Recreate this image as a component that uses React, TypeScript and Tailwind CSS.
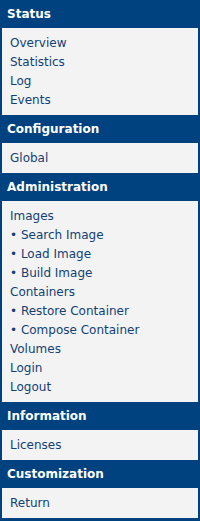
import React from "react";

type Section = { title: string; items: string[] };

const sections: Section[] = [
  { title: "Status", items: ["Overview", "Statistics", "Log", "Events"] },
  { title: "Configuration", items: ["Global"] },
  {
    title: "Administration",
    items: [
      "Images",
      "• Search Image",
      "• Load Image",
      "• Build Image",
      "Containers",
      "• Restore Container",
      "• Compose Container",
      "Volumes",
      "Login",
      "Logout",
    ],
  },
  { title: "Information", items: ["Licenses"] },
  { title: "Customization", items: ["Return"] },
];

export default function App() {
  return (
    <div
      className="w-[200px] h-[521px] bg-[#00427f] px-[2px] pb-[2px] flex flex-col"
      style={{ fontFamily: '"DejaVu Sans", Verdana, sans-serif' }}
    >
      {sections.map((s) => (
        <div key={s.title} className="flex flex-col">
          <div className="h-[28px] flex items-center pl-[5px] text-[12px] font-bold text-white">
            {s.title}
          </div>
          <div className="bg-[#f3f3f3] pt-[6px] pb-[5px] pl-[8px] flex flex-col">
            {s.items.map((it) => (
              <a
                key={it}
                className="text-[12px] leading-[19px] text-[#123f74] whitespace-pre"
              >
                {it}
              </a>
            ))}
          </div>
        </div>
      ))}
      <div className="flex-1 bg-[#00427f]" />
    </div>
  );
}
